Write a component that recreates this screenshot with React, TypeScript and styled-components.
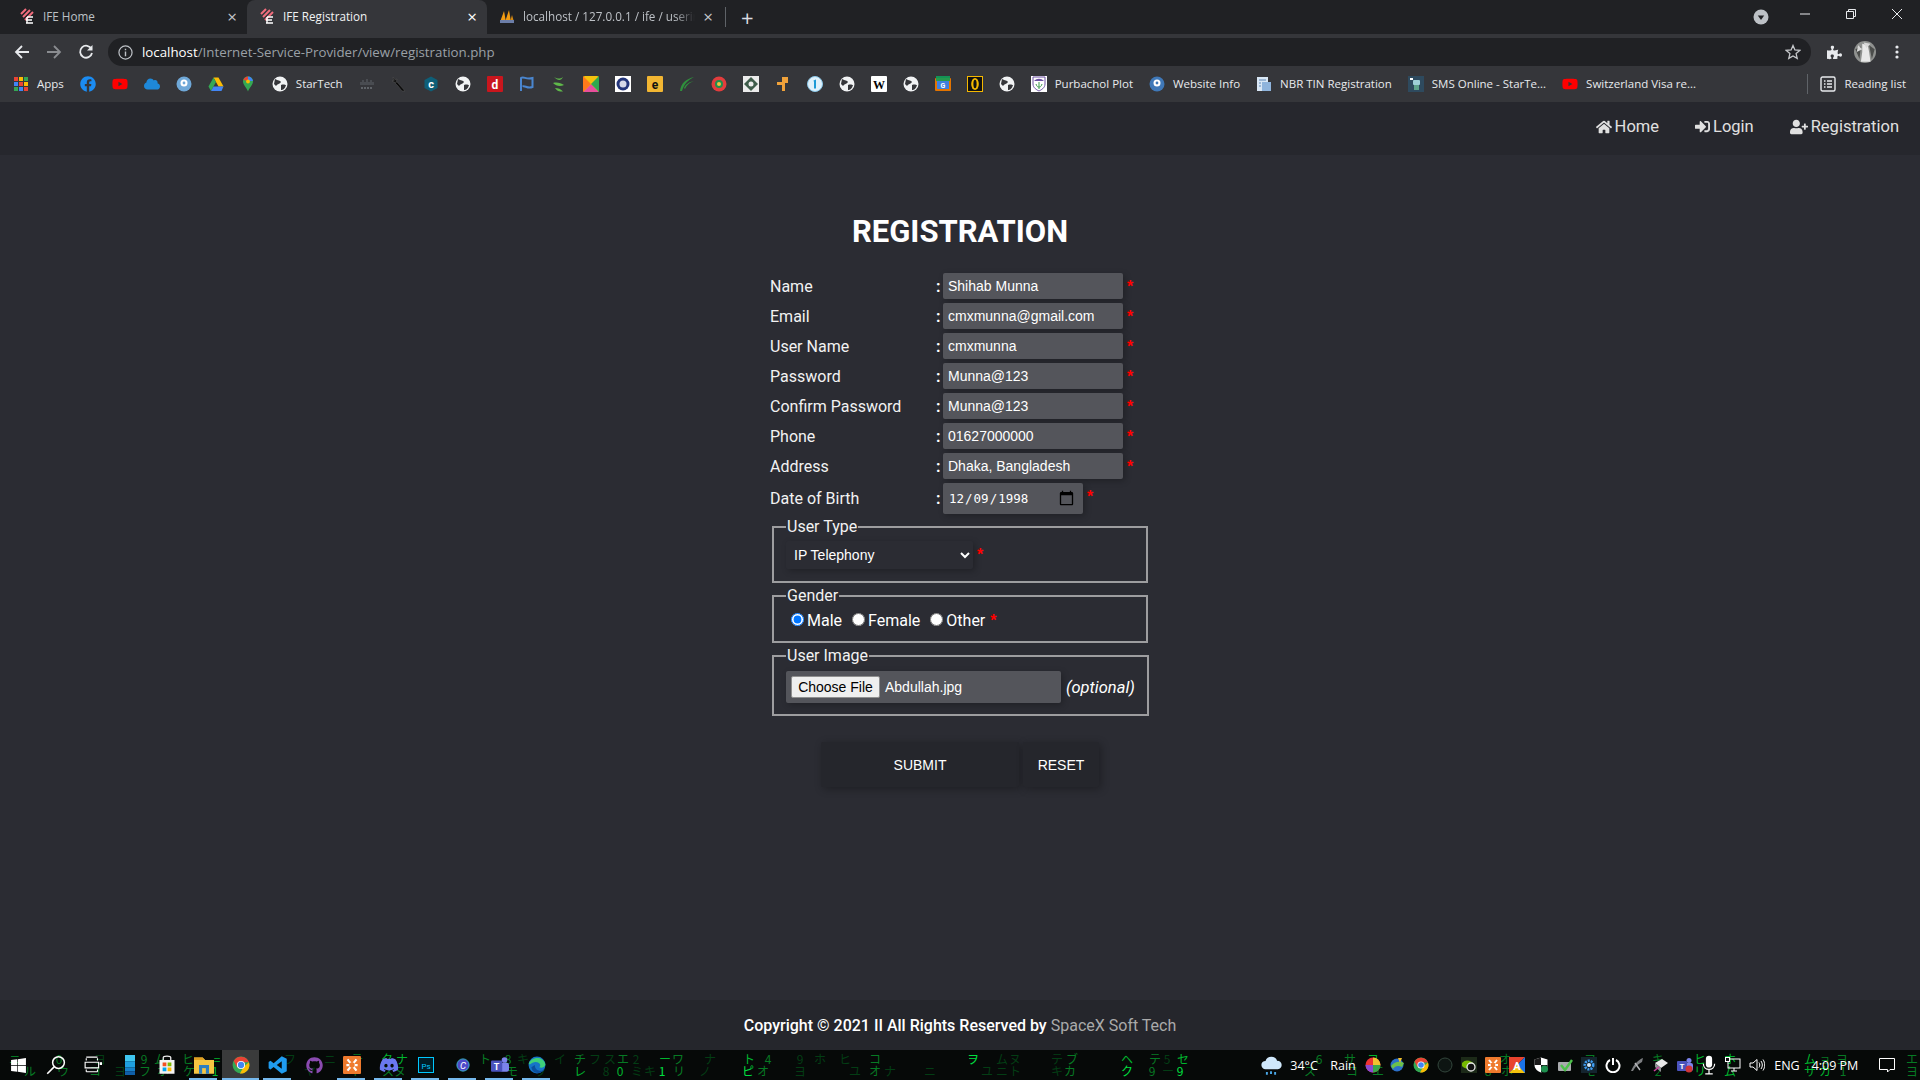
import React from 'react'
import styled, { createGlobalStyle } from 'styled-components'
import {
  FaHome,
  FaSignInAlt,
  FaUserPlus,
  FaFacebook,
  FaYoutube,
  FaCloud,
  FaPuzzlePiece,
  FaWindows,
  FaDiscord,
  FaGithub,
} from 'react-icons/fa'

const GlobalStyle = createGlobalStyle`
  html, body { margin: 0; padding: 0; background: #2b2c33; }
  * { box-sizing: border-box; }
`

const CHROME_FONT = `"Open Sans", "Noto Sans", sans-serif`
const PAGE_FONT = `Roboto, "Noto Sans", sans-serif`
const FORM_FONT = `"Liberation Sans", Arial, sans-serif`

const Page = styled.div`
  width: 1920px;
  height: 1080px;
  display: flex;
  flex-direction: column;
  overflow: hidden;
  background: #2b2c33;
  color: #fff;
  font-family: ${PAGE_FONT};
`

/* browser chrome */
const TabStrip = styled.div`
  height: 34px;
  background: #202124;
  display: flex;
  align-items: flex-end;
  padding-left: 7px;
  font: 11.7px ${CHROME_FONT};
`

const Tab = styled.div<{ $active?: boolean; $w?: number }>`
  width: ${(p) => p.$w || 240}px;
  height: 34px;
  display: flex;
  align-items: center;
  gap: 8px;
  padding: 0 10px 2px 12px;
  border-radius: 8px 8px 0 0;
  background: ${(p) => (p.$active ? '#35363a' : 'transparent')};
  color: ${(p) => (p.$active ? '#f1f3f4' : '#bdc1c6')};
`

const TabTitle = styled.span<{ $fade?: boolean }>`
  flex: 1;
  white-space: nowrap;
  overflow: hidden;
  mask-image: ${(p) => (p.$fade ? 'linear-gradient(to right, #000 88%, transparent)' : 'none')};
`

const TabClose = styled.span<{ $active?: boolean }>`
  font-size: 17px;
  line-height: 1;
  color: ${(p) => (p.$active ? '#fff' : '#c4c7cb')};
`

const TabSeparator = styled.div`
  width: 1px;
  height: 20px;
  margin: 0 0 7px 2px;
  background: #5f6368;
`

const NewTab = styled.span`
  margin: 0 0 6px 15px;
  font-size: 22px;
  line-height: 1;
  color: #dadce0;
`

const WindowControls = styled.div`
  margin-left: auto;
  height: 34px;
  display: flex;
  align-items: center;
`

const WindowButton = styled.div`
  width: 46px;
  display: flex;
  justify-content: center;
  margin-top: -6px;
`

const ProfileButton = styled(WindowButton)`
  margin: 0 9px 0 0;
  width: 24px;
`

const Toolbar = styled.div`
  height: 32px;
  background: #35363a;
  display: flex;
  align-items: flex-start;
  padding: 4px 0 0 6px;
`

const NavIcon = styled.div<{ $w?: number }>`
  width: ${(p) => p.$w || 32}px;
  flex: none;
  height: 28px;
  display: flex;
  align-items: center;
  justify-content: center;
`

const UrlBar = styled.div`
  width: 1703px;
  flex: none;
  height: 28px;
  margin-left: 6px;
  border-radius: 14px;
  background: #202124;
  display: flex;
  align-items: center;
  padding: 0 10px;
  font: 13.3px ${CHROME_FONT};
  color: #9aa0a6;
`

const UrlHost = styled.span`
  color: #fff;
  margin-left: 9px;
`

const UrlEnd = styled.div`
  margin-left: auto;
  display: flex;
`

const BookmarkBar = styled.div`
  height: 36px;
  background: #35363a;
  display: flex;
  align-items: center;
  padding: 0 0 1px 5px;
  font: 11.5px ${CHROME_FONT};
  color: #e8eaed;
  white-space: nowrap;
`

const Bookmark = styled.div`
  display: flex;
  align-items: center;
  gap: 8px;
  padding: 0 8px;
  height: 24px;
`

const BookmarkDivider = styled.div`
  width: 1px;
  height: 20px;
  background: #5f6368;
  margin-left: auto;
`

const ReadingList = styled(Bookmark)`
  padding: 0 14px 0 12px;
`

/* site */
const SiteNav = styled.nav`
  height: 53px;
  background: #26272d;
  display: flex;
  align-items: center;
  justify-content: flex-end;
  gap: 36px;
  padding: 0 21px 4px 0;
  font-size: 16.5px;
  color: #e0e0e0;
`

const SiteLink = styled.a`
  display: flex;
  align-items: center;
  gap: 3px;
`

const Main = styled.main`
  flex: 1;
  display: flex;
  flex-direction: column;
  align-items: center;
  padding-top: 56px;
`

const Heading = styled.h1`
  margin: 0 0 20px;
  height: 42px;
  line-height: 42px;
  font-size: 31px;
  font-weight: 700;
  color: #fff;
`

const Form = styled.form`
  width: 380px;
  display: flex;
  flex-direction: column;
  gap: 4px;
`

const Row = styled.div`
  height: 26px;
  display: flex;
  align-items: center;
`

const DateRow = styled(Row)`
  height: 31px;
  margin-bottom: 2px;
`

const Label = styled.label`
  width: 166px;
  font-size: 16px;
  color: #f2f2f2;
`

const Colon = styled.span`
  width: 7px;
  font-size: 16px;
  font-weight: 700;
`

const TextInput = styled.input`
  width: 180px;
  height: 26px;
  border: none;
  outline: none;
  border-radius: 2px;
  padding: 0 5px;
  background: #54555b;
  color: #fff;
  font: 14px ${FORM_FONT};
  box-shadow: 2px 2px 6px rgba(0, 0, 0, 0.25);
`

const DateInput = styled(TextInput)`
  width: 140px;
  height: 31px;
  font: 12.5px "DejaVu Sans Mono", monospace;
  &::-webkit-calendar-picker-indicator {
    width: 17px;
    height: 17px;
    padding: 0;
    margin: 0 3px 0 0;
  }
`

const Req = styled.span<{ $inline?: boolean }>`
  align-self: ${(p) => (p.$inline ? 'center' : 'flex-start')};
  margin: ${(p) => (p.$inline ? '0' : '5px 0 0 4px')};
  color: #ff0000;
  font: 700 16px/18px ${FORM_FONT};
`

const Group = styled.fieldset<{ $h: number }>`
  margin: 0 2px 2px 2px;
  padding: 0 12px;
  height: ${(p) => p.$h}px;
  border: 2px solid #9d9d9f;
  display: flex;
  align-items: flex-start;
`

const Legend = styled.legend`
  padding: 0 1px;
  margin-left: 0;
  font-size: 16px;
  line-height: 14px;
  color: #f2f2f2;
`

const SelectBox = styled.select`
  width: 187px;
  height: 28px;
  border: none;
  outline: none;
  border-radius: 2px;
  padding: 0 4px;
  background: #2b2c33;
  color: #fff;
  font: 14px ${FORM_FONT};
  box-shadow: 2px 2px 6px rgba(0, 0, 0, 0.25);
`

const SelectLine = styled.div`
  display: flex;
  margin-top: 7px;
`

const RadioLine = styled.div`
  display: flex;
  align-items: center;
  margin-top: 8px;
  font-size: 16px;
`

const Radio = styled.input`
  width: 13px;
  height: 13px;
  margin: 0 3px 2px 5px;
`

const RadioText = styled.label`
  margin-right: 5px;
`

const FileLine = styled.div`
  display: flex;
  align-items: center;
  margin-top: 8px;
`

const FileBox = styled.div`
  width: 275px;
  height: 32px;
  background: #54555b;
  border-radius: 2px;
  display: flex;
  align-items: center;
  padding-left: 5px;
  font: 14px ${FORM_FONT};
  box-shadow: 2px 2px 6px rgba(0, 0, 0, 0.25);
`

const FileButton = styled.button`
  width: 89px;
  height: 22px;
  padding: 0;
  margin-right: 5px;
  border: 1px solid #8f8f8f;
  border-radius: 2px;
  background: #efefef;
  color: #000;
  font: 14px ${FORM_FONT};
`

const Optional = styled.em`
  margin-left: 5px;
  font-size: 16.5px;
  white-space: nowrap;
`

const Buttons = styled.div`
  display: flex;
  justify-content: center;
  gap: 4px;
  margin-top: 20px;
`

const ActionButton = styled.button<{ $w: number }>`
  width: ${(p) => p.$w}px;
  height: 45px;
  border: none;
  border-radius: 2px;
  background: #25262c;
  color: #fff;
  font: 14px ${FORM_FONT};
  box-shadow: 2px 2px 8px rgba(0, 0, 0, 0.3);
`

const Footer = styled.footer`
  height: 50px;
  background: #25262c;
  display: flex;
  align-items: center;
  justify-content: center;
  font-size: 16px;
  font-weight: 500;
  color: #fff;
`

const FooterBrand = styled.span`
  margin-left: 4px;
  font-weight: 400;
  color: #aaa;
`

/* windows taskbar */
const Taskbar = styled.div`
  position: relative;
  height: 30px;
  background: #060908;
  overflow: hidden;
  display: flex;
  align-items: center;
  font: 12.5px ${CHROME_FONT};
  color: #fff;
`

const Matrix = styled.div`
  position: absolute;
  inset: 0;
  font: 12px/14px "Noto Sans CJK JP", monospace;
`

const LEVELS = ['#033d14', '#067a24', '#00b52e', '#00e040']

const MatrixGlyph = styled.span<{ $x: number; $row: number; $level: number }>`
  position: absolute;
  left: ${(p) => p.$x - 7}px;
  top: ${(p) => (p.$row === 0 ? 2 : 14)}px;
  width: 14px;
  text-align: center;
  color: ${(p) => LEVELS[p.$level]};
`

const TaskIcons = styled.div`
  position: relative;
  display: flex;
  align-items: center;
`

const TaskItem = styled.div<{ $active?: boolean; $open?: boolean }>`
  position: relative;
  width: 37px;
  height: 30px;
  display: flex;
  align-items: center;
  justify-content: center;
  background: ${(p) => (p.$active ? '#3a3b3b' : 'transparent')};
  &::after {
    content: '';
    position: absolute;
    bottom: 0;
    left: ${(p) => (p.$active ? 0 : 4)}px;
    right: ${(p) => (p.$active ? 0 : 5)}px;
    height: 2px;
    background: ${(p) => (p.$open ? '#76b9ed' : 'transparent')};
  }
`

const Tray = styled.div`
  position: relative;
  margin-left: auto;
  display: flex;
  align-items: center;
  height: 30px;
`

const TrayItem = styled.div<{ $w?: number }>`
  width: ${(p) => p.$w || 24}px;
  height: 30px;
  display: flex;
  align-items: center;
  justify-content: center;
`

const TrayText = styled.span<{ $w: number }>`
  width: ${(p) => p.$w}px;
  text-align: center;
  white-space: nowrap;
`

/* wallpaper glyphs seen behind the taskbar: x, character, row, brightness */
const MATRIX: [number, string, number, number][] = [
  [15, 'ニ', 0, 1], [59, '0', 0, 1], [144, '9', 0, 1], [160, 'ム', 0, 1], [188, 'ヒ', 0, 1], [217, '=', 0, 2],
  [100, 'ヨ', 0, 0], [290, 'フ', 0, 0], [330, 'ニ', 0, 0], [357, 'テ', 0, 1], [387, 'タ', 0, 2], [402, 'ナ', 0, 2],
  [485, 'ト', 0, 1], [508, '8', 0, 1], [523, 'キ', 0, 0], [560, 'イ', 0, 0], [580, 'チ', 0, 1], [595, 'フ', 0, 0],
  [610, 'ス', 0, 0], [623, 'エ', 0, 1], [636, '2', 0, 0], [665, 'ー', 0, 2], [678, 'ワ', 0, 1], [710, 'ナ', 0, 0],
  [749, 'ト', 0, 2], [768, '4', 0, 1], [800, '9', 0, 0], [820, 'ホ', 0, 0], [845, 'ヒ', 0, 0], [875, 'コ', 0, 1],
  [973, 'ヲ', 0, 3], [1002, 'ム', 0, 0], [1015, 'ヌ', 0, 0], [1057, 'テ', 0, 0], [1072, 'ブ', 0, 1],
  [1127, 'ヘ', 0, 2], [1155, 'テ', 0, 1], [1167, '5', 0, 0], [1183, 'セ', 0, 2], [1319, '6', 0, 1],
  [1350, 'サ', 0, 1], [1373, 'ヨ', 0, 2], [1505, 'オ', 0, 1], [1590, 'ヲ', 0, 1], [1658, 'キ', 0, 1],
  [1700, 'ヒ', 0, 2], [1730, 'ホ', 0, 2], [1810, 'ム', 0, 2], [1825, 'ョ', 0, 1], [1842, 'ヨ', 0, 1], [1912, 'エ', 0, 1],
  [30, 'ル', 1, 1], [63, 'ウ', 1, 1], [95, 'コ', 1, 1], [145, 'フ', 1, 1], [120, 'ヨ', 1, 0], [163, 'ホ', 1, 1],
  [189, 'ケ', 1, 1], [215, '1', 1, 2], [310, 'ヤ', 1, 0], [354, '4', 1, 1], [388, 'ス', 1, 1], [400, 'ヌ', 1, 1],
  [512, 'モ', 1, 1], [540, 'ウ', 1, 0], [580, 'レ', 1, 2], [606, '8', 1, 0], [620, '0', 1, 2], [637, 'ミ', 1, 0],
  [650, 'キ', 1, 0], [662, '1', 1, 3], [679, 'リ', 1, 1], [705, 'ノ', 1, 0], [748, 'ピ', 1, 3], [763, 'オ', 1, 1],
  [800, 'ヨ', 1, 0], [855, 'ユ', 1, 0], [875, 'オ', 1, 1], [890, 'ナ', 1, 0], [930, 'ニ', 1, 0],
  [987, 'ユ', 1, 0], [1002, 'ニ', 1, 0], [1015, 'ト', 1, 0], [1057, 'キ', 1, 0], [1070, 'カ', 1, 1],
  [1127, 'ク', 1, 3], [1152, '9', 1, 1], [1168, 'ー', 1, 0], [1180, '9', 1, 3], [1310, 'ス', 1, 1], [1352, 'コ', 1, 1],
  [1378, 'エ', 1, 1], [1488, '8', 1, 1], [1507, 'ホ', 1, 1], [1590, 'モ', 1, 1], [1658, '2', 1, 1], [1700, 'リ', 1, 2],
  [1730, 'ム', 1, 2], [1810, 'サ', 1, 2], [1825, 'カ', 1, 2], [1843, '1', 1, 1], [1912, 'ヨ', 1, 1],
]

const Svg = ({ s = 16, children, vb = '0 0 16 16' }: { s?: number; vb?: string; children: React.ReactNode }) => (
  <svg width={s} height={s} viewBox={vb} style={{ flex: 'none' }}>
    {children}
  </svg>
)

const IfeLogo = () => (
  <Svg>
    <g stroke="#f26d7d" strokeWidth="2" fill="none">
      <path d="M2 6 L7 1 M4 9 L11 2 M6 12 L14 4" />
      <path d="M8 9 h6 M7 12 h6 M7 15 h7 M8 9 v6" stroke="#fff" strokeWidth="1.4" />
    </g>
  </Svg>
)

const PmaLogo = () => (
  <Svg>
    <path d="M1 14 L5 3 L7 14 Z" fill="#f39c12" />
    <path d="M6 14 L10 2 L12 14 Z" fill="#f39c12" />
    <path d="M11 14 L13 7 L15 14 Z" fill="#d68910" />
    <rect x="1" y="12" width="14" height="3" fill="#6c7ea8" />
  </Svg>
)

const Globe = () => (
  <Svg>
    <circle cx="8" cy="8" r="7.5" fill="#f1f3f4" />
    <path d="M3 3 C6 5 8 4 9 6 C8 8 5 8 4 10 L2 8 Z M9 9 C12 8 13 9 14 9 C13 13 11 14 9 14 Z" fill="#35363a" />
  </Svg>
)

const AppsGrid = () => {
  const colors = ['#ea4335', '#fbbc04', '#34a853', '#4285f4', '#ea4335', '#fbbc04', '#34a853', '#4285f4', '#ea4335']
  return (
    <Svg>
      {colors.map((c, i) => (
        <rect key={i} x={1 + (i % 3) * 5} y={1 + Math.floor(i / 3) * 5} width="4" height="4" fill={c} />
      ))}
    </Svg>
  )
}

const Drive = () => (
  <Svg>
    <path d="M5.5 1.5 h5 l5 9 h-5 z" fill="#fbbc04" />
    <path d="M5.5 1.5 L0.5 10.5 L3 15 L8 6 z" fill="#34a853" />
    <path d="M3 15 h10.5 l2 -4.5 H5.5 z" fill="#4285f4" />
  </Svg>
)

const MapsPin = () => (
  <Svg>
    <path d="M8 0.5 C4.5 0.5 3 3 3 5.5 C3 9 7 12 8 15.5 C9 12 13 9 13 5.5 C13 3 11.5 0.5 8 0.5 Z" fill="#34a853" />
    <path d="M3.4 4 C4 2 6 0.5 8 0.5 L8 5 Z" fill="#ea4335" />
    <path d="M8 0.5 C10.5 .5 12.5 2.5 13 5 L8 5 Z" fill="#4285f4" />
    <circle cx="8" cy="5.5" r="1.9" fill="#fbbc04" />
  </Svg>
)

const ChromeLogo = ({ s = 16 }: { s?: number }) => (
  <Svg s={s}>
    <circle cx="8" cy="8" r="7.5" fill="#34a853" />
    <path d="M1.5 4.5 A7.5 7.5 0 0 1 15 5.5 L8 5.5 L4.5 10 Z" fill="#ea4335" />
    <path d="M15 5.5 A7.5 7.5 0 0 1 7 15.5 L10.5 9.5 Z" fill="#fbbc04" />
    <circle cx="8" cy="8" r="3.6" fill="#fff" />
    <circle cx="8" cy="8" r="2.8" fill="#4285f4" />
  </Svg>
)

const Tile = ({ bg, fg = '#fff', text, fam = PAGE_FONT }: { bg: string; fg?: string; text: string; fam?: string }) => (
  <Svg>
    <rect width="16" height="16" rx="1" fill={bg} />
    <text x="8" y="12.5" textAnchor="middle" fontSize="12" fontWeight="700" fill={fg} fontFamily={fam}>
      {text}
    </text>
  </Svg>
)

const Badge = ({ color, inner = '#fff' }: { color: string; inner?: string }) => (
  <Svg>
    <circle cx="8" cy="8" r="7.5" fill={color} />
    <circle cx="8" cy="7" r="3.5" fill={inner} />
    <circle cx="8" cy="7" r="1.4" fill={color} />
  </Svg>
)

const Bird = () => (
  <Svg>
    <path d="M2 1 L7 7 L14 15 L11 15 L7 10 L3 6 Z" fill="#0b0b0b" stroke="#555" strokeWidth="0.5" />
    <path d="M1 5 L6 3 L5 7 Z" fill="#111" stroke="#666" strokeWidth="0.4" />
  </Svg>
)

const Cisco = () => (
  <Svg>
    <g stroke="#5f6368" strokeWidth="1">
      <path d="M2 6 v3 M4 4 v5 M6 6 v3 M8 3 v6 M10 6 v3 M12 4 v5 M14 6 v3" />
      <path d="M2 12 h12" strokeWidth="2" strokeDasharray="2 1" />
    </g>
  </Svg>
)

const Hexagon = () => (
  <Svg>
    <path d="M8 .5 L14.5 4 V12 L8 15.5 L1.5 12 V4 Z" fill="#0e5f78" />
    <text x="8" y="12" textAnchor="middle" fontSize="11" fontWeight="700" fill="#fff" fontFamily={PAGE_FONT}>c</text>
  </Svg>
)

const Flag = () => (
  <Svg>
    <path d="M2 15 V2 C5 0 7 4 13.5 2 V11 C8 13 6 9 3.5 10.5" fill="none" stroke="#4a86cf" strokeWidth="2" />
  </Svg>
)

const Leaf = () => (
  <Svg>
    <path d="M3 1 C7 3 9 3 12 1 C10 5 7 5 3 1 Z M2 7 C6 6 10 7 13 9 C9 11 5 10 2 7 Z M4 12 C7 12 10 13 12 15.5 C8 15.5 6 15 4 12 Z" fill="#5fb84a" />
  </Svg>
)

const Rainbow = () => (
  <Svg>
    <rect width="16" height="16" rx="2" fill="#f4c20d" />
    <path d="M0 16 L8 8 L16 16 Z" fill="#e84f9c" />
    <path d="M16 0 L8 8 L16 16 Z" fill="#2fa84f" />
    <path d="M0 0 L8 8 L0 16 Z" fill="#ff7a1a" />
  </Svg>
)

const Seal = () => (
  <Svg>
    <rect width="16" height="16" fill="#fff" />
    <circle cx="8" cy="8" r="6.5" fill="#23357a" />
    <circle cx="8" cy="8" r="3.5" fill="#d5d8e8" />
  </Svg>
)

const Grass = () => (
  <Svg>
    <path d="M1 15 C2 7 7 3 15 1 C9 4 5 8 3 15 Z" fill="#2f8f3c" />
    <path d="M5 12 C7 8 10 6 15 5 C10 7 8 9 6 13 Z" fill="#2f8f3c" />
  </Svg>
)

const Shield = () => (
  <Svg>
    <circle cx="8" cy="8" r="7.5" fill="#e23d3d" />
    <circle cx="8" cy="8" r="4" fill="#1f8f4e" />
    <circle cx="8" cy="8" r="2" fill="#f0c040" />
  </Svg>
)

const Diamond = () => (
  <Svg>
    <rect width="16" height="16" fill="#ececec" />
    <path d="M8 1 L15 8 L8 15 L1 8 Z" fill="#3e5c4a" />
    <circle cx="8" cy="8" r="2.5" fill="#ececec" />
  </Svg>
)

const Cross = () => (
  <Svg>
    <path d="M7 1 H13 V7 H10 V15 H7 V9 H2 V6 H7 Z" fill="#f0a23a" />
  </Svg>
)

const OneBadge = () => (
  <Svg>
    <circle cx="8" cy="8" r="7.5" fill="#dff1fb" stroke="#8ac8ea" />
    <path d="M6.5 4.5 L9 3.5 V12.5 H7 V6 Z" fill="#1b9ad6" />
  </Svg>
)

const Calendar = () => (
  <Svg>
    <rect y="2" width="16" height="13" rx="1" fill="#e37400" />
    <rect x="1" y="0" width="14" height="5" fill="#0f9d58" opacity="0.9" />
    <rect x="2" y="5" width="12" height="8" fill="#3d7fe0" />
    <text x="8" y="12" textAnchor="middle" fontSize="7" fontWeight="700" fill="#fff" fontFamily={PAGE_FONT}>G</text>
  </Svg>
)

const RingTile = () => (
  <Svg>
    <rect width="16" height="16" fill="#f5b800" />
    <rect x="1" y="1" width="14" height="14" fill="#111" />
    <ellipse cx="8" cy="8" rx="3.8" ry="6" fill="#f5b800" />
    <ellipse cx="8" cy="8" rx="1.6" ry="4.2" fill="#111" />
  </Svg>
)

const Emblem = () => (
  <Svg>
    <rect width="16" height="16" fill="#fff" />
    <path d="M2 1 H14 V8 C14 12 10 14 8 15 C6 14 2 12 2 8 Z" fill="#fff" stroke="#6a4fa0" strokeWidth="1" />
    <path d="M3 5 C6 2 10 2 13 5 Z" fill="#6a4fa0" />
    <path d="M8 6 V13 M5 8 C6 11 7 11 8 11 M11 8 C10 11 9 11 8 11" stroke="#3a9a4a" fill="none" />
  </Svg>
)

const DocIcon = () => (
  <Svg>
    <rect x="1" y="1" width="11" height="14" fill="#d9e7f5" />
    <rect x="6" y="6" width="9" height="9" fill="#8fb4dc" />
    <path d="M3 4 h7 M3 7 h2 M3 10 h2" stroke="#5f87b5" />
  </Svg>
)

const Robot = () => (
  <Svg>
    <rect width="16" height="16" fill="#2e4a5e" />
    <rect x="5" y="4" width="7" height="5" rx="1" fill="#9ed0d8" />
    <rect x="6" y="9" width="5" height="5" fill="#5ea38c" />
    <rect x="2" y="2" width="3" height="2" fill="#fff" />
  </Svg>
)

const ReadingIcon = () => (
  <Svg>
    <rect x="1" y="1" width="14" height="14" rx="1.5" fill="none" stroke="#e8eaed" strokeWidth="1.4" />
    <path d="M4 5 h1.5 M7 5 h5 M4 8 h1.5 M7 8 h5 M4 11 h1.5 M7 11 h5" stroke="#e8eaed" strokeWidth="1.4" />
  </Svg>
)

const Back = () => (
  <Svg>
    <path d="M15 8 H2 M8 2 L2 8 L8 14" fill="none" stroke="#e8eaed" strokeWidth="1.8" />
  </Svg>
)

const Forward = () => (
  <Svg>
    <path d="M1 8 H14 M8 2 L14 8 L8 14" fill="none" stroke="#8a8c90" strokeWidth="1.8" />
  </Svg>
)

const Reload = () => (
  <Svg>
    <path d="M13.5 5 A6 6 0 1 0 14 9" fill="none" stroke="#e8eaed" strokeWidth="1.8" />
    <path d="M14.5 1 V6.5 H9 Z" fill="#e8eaed" />
  </Svg>
)

const Info = () => (
  <Svg s={15}>
    <circle cx="8" cy="8" r="7" fill="none" stroke="#bdc1c6" strokeWidth="1.3" />
    <path d="M8 7 V12 M8 4 V5.6" stroke="#bdc1c6" strokeWidth="1.5" />
  </Svg>
)

const StarOutline = () => (
  <Svg>
    <path d="M8 1.5 L9.9 6 L14.8 6.4 L11.1 9.6 L12.2 14.4 L8 11.9 L3.8 14.4 L4.9 9.6 L1.2 6.4 L6.1 6 Z" fill="none" stroke="#c6c8cb" strokeWidth="1.3" />
  </Svg>
)

const Avatar = () => (
  <Svg s={22}>
    <circle cx="8" cy="8" r="8" fill="#8f918f" />
    <path d="M6 2 L10 3 L11 8 L12 15 L5 15 L6 8 Z" fill="#e9e9e9" />
    <path d="M1 6 L5 4 L4 13 Z M11 3 L15 6 L13 13 Z" fill="#4b4d4b" />
    <path d="M7 1 L12 2 L9 5 Z M3 3 L6 6 L2 8 Z" fill="#d8d8d8" />
  </Svg>
)

const Dots = () => (
  <Svg>
    <circle cx="8" cy="3" r="1.6" fill="#e8eaed" />
    <circle cx="8" cy="8" r="1.6" fill="#e8eaed" />
    <circle cx="8" cy="13" r="1.6" fill="#e8eaed" />
  </Svg>
)

const ProfileDrop = () => (
  <Svg>
    <circle cx="8" cy="8" r="7.5" fill="#bdc1c6" />
    <path d="M4.8 6.5 H11.2 L8 11 Z" fill="#202124" />
  </Svg>
)

const Minimize = () => (
  <Svg s={12} vb="0 0 12 12">
    <path d="M1 6 H11" stroke="#e8eaed" />
  </Svg>
)

const Restore = () => (
  <Svg s={12} vb="0 0 12 12">
    <path d="M1.5 3.5 H8.5 V10.5 H1.5 Z M3.5 3.5 V1.5 H10.5 V8.5 H8.5" fill="none" stroke="#e8eaed" />
  </Svg>
)

const CloseX = () => (
  <Svg s={12} vb="0 0 12 12">
    <path d="M1 1 L11 11 M11 1 L1 11" stroke="#e8eaed" />
  </Svg>
)

const SearchIcon = () => (
  <Svg s={20}>
    <circle cx="10" cy="6" r="4.7" fill="none" stroke="#fff" strokeWidth="1.2" />
    <path d="M6.5 9.5 L1 15" stroke="#fff" strokeWidth="1.3" />
  </Svg>
)

const TaskView = () => (
  <Svg s={18}>
    <path d="M2 1 H12 M2 4 V2 M12 4 V2 M1 5.5 H13 V10.5 H1 Z M2 14 H12 M2 12 V14 M12 12 V14" fill="none" stroke="#fff" strokeWidth="1" />
    <rect x="14" y="5.5" width="2" height="2.5" fill="#fff" />
  </Svg>
)

const BlueBar = () => (
  <Svg s={20}>
    <rect x="4" y="0" width="8" height="5" fill="#3ec6f0" />
    <rect x="4" y="5" width="8" height="5" fill="#1e9fe0" />
    <rect x="4" y="10" width="8" height="3" fill="#1680c8" />
    <rect x="4" y="13" width="8" height="3" fill="#0f5fa8" />
  </Svg>
)

const StoreIcon = () => (
  <Svg s={20}>
    <path d="M2 4 H14 V15 H2 Z" fill="#f3f3f3" />
    <path d="M5 4 V2 C5 .5 11 .5 11 2 V4" fill="none" stroke="#f3f3f3" />
    <rect x="4.5" y="6" width="3" height="3" fill="#f25022" />
    <rect x="8.5" y="6" width="3" height="3" fill="#7fba00" />
    <rect x="4.5" y="10" width="3" height="3" fill="#00a4ef" />
    <rect x="8.5" y="10" width="3" height="3" fill="#ffb900" />
  </Svg>
)

const Explorer = () => (
  <Svg s={20}>
    <path d="M0 2 H7 L9 4 H16 V15 H0 Z" fill="#f5c542" />
    <path d="M0 2 H7 L8 4 H0 Z" fill="#e0a020" />
    <rect x="4" y="8" width="8" height="7" fill="#2d7fc1" />
    <rect x="6.5" y="10.5" width="3" height="4.5" fill="#f5c542" />
  </Svg>
)

const VsCode = () => (
  <Svg s={20}>
    <path d="M11 1 L15 3 V13 L11 15 L4.5 9.5 L2 11.5 L.5 10.5 V5.5 L2 4.5 L4.5 6.5 Z M11 5 L7 8 L11 11 Z" fill="#1f9cf0" fillRule="evenodd" />
  </Svg>
)

const Ps = () => (
  <Svg s={16}>
    <rect x=".5" y=".5" width="15" height="15" fill="#001d26" stroke="#00c8ff" />
    <text x="8" y="11.5" textAnchor="middle" fontSize="8" fill="#00c8ff" fontFamily={PAGE_FONT}>Ps</text>
  </Svg>
)

const Xampp = ({ s = 18 }: { s?: number }) => (
  <Svg s={s}>
    <rect width="16" height="16" rx="1" fill="#ef7a2d" />
    <path d="M4 3 L12 13 M12 3 L4 13 M3 8 H13" stroke="#fff" strokeWidth="2" />
    <circle cx="8" cy="8" r="2.4" fill="#ef7a2d" />
  </Svg>
)

const CIcon = () => (
  <Svg s={14}>
    <circle cx="8" cy="8" r="7" fill="#4e4ac8" />
    <circle cx="8" cy="8" r="7" fill="none" stroke="#3ac0d8" strokeWidth="1" />
    <text x="8" y="12" textAnchor="middle" fontSize="11" fontStyle="italic" fill="#fff" fontFamily={PAGE_FONT}>C</text>
  </Svg>
)

const Teams = ({ s = 18, dot }: { s?: number; dot?: boolean }) => (
  <Svg s={s}>
    <circle cx="12" cy="3.5" r="2.5" fill="#7b83eb" />
    <rect x="8" y="6" width="8" height="8" rx="2" fill="#7b83eb" />
    <rect x="0" y="4" width="10" height="10" rx="1" fill="#4b53bc" />
    <text x="5" y="12" textAnchor="middle" fontSize="8" fontWeight="700" fill="#fff" fontFamily={PAGE_FONT}>T</text>
    {dot && <circle cx="12" cy="12" r="3.5" fill="#d13438" />}
  </Svg>
)

const Edge = () => (
  <Svg s={18}>
    <circle cx="8" cy="8" r="7.5" fill="#1674c8" />
    <path d="M.6 7 C2 1 13 -1 15.4 7 C16 10 12 11 10 10 C13 7 8 4 4 6 C2.5 7 1.5 8 .6 7 Z" fill="#3ed07a" />
    <path d="M6 8 C6 13 12 15 15 11 C13 16 4 17 3 10 Z" fill="#0b4f9e" />
  </Svg>
)

const TrayCloud = () => (
  <Svg s={22}>
    <path d="M4 11 A3 3 0 0 1 4 5 A4.5 4.5 0 0 1 12.5 5 A3 3 0 0 1 13 11 Z" fill="#cfe8fb" />
    <path d="M5 13 V15 M8 12.5 V14.5 M11 13 V15" stroke="#4aa8e8" strokeWidth="1.4" />
  </Svg>
)

const Wheel = () => (
  <Svg>
    <circle cx="8" cy="8" r="7.5" fill="#e33" />
    <path d="M8 8 L8 .5 A7.5 7.5 0 0 1 15.5 8 Z" fill="#f2c230" />
    <path d="M8 8 L15.5 8 A7.5 7.5 0 0 1 8 15.5 Z" fill="#3aa84a" />
    <path d="M8 8 L8 15.5 A7.5 7.5 0 0 1 .5 8 Z" fill="#8a4ad0" />
  </Svg>
)

const Idm = () => (
  <Svg>
    <circle cx="8" cy="8" r="6.5" fill="#2b6fc9" />
    <path d="M2 9 C6 4 11 4 15 6 L13 10 C9 8 6 9 4 12 Z" fill="#6cc04a" />
    <path d="M9 1 H13 L11 6 Z" fill="#f2c230" />
  </Svg>
)

const DarkRing = () => (
  <Svg>
    <circle cx="8" cy="8" r="7" fill="#0d1512" stroke="#33463c" />
  </Svg>
)

const NvTile = () => (
  <Svg>
    <rect width="16" height="16" fill="#1c2a18" />
    <path d="M1 6 C5 1 11 4 14 8 C11 12 5 13 1 9 Z" fill="#76b900" />
    <circle cx="10" cy="10" r="4" fill="#111" stroke="#e8e8e8" strokeWidth="1.3" />
  </Svg>
)

const AvgTile = () => (
  <Svg>
    <path d="M0 0 H16 L0 16 Z" fill="#e8432e" />
    <path d="M16 0 V16 H0 Z" fill="#1a73e8" />
    <path d="M0 16 L8 8 L16 16 Z" fill="#f4c20d" />
    <text x="8" y="12.5" textAnchor="middle" fontSize="11" fontWeight="700" fill="#fff" fontFamily={PAGE_FONT}>A</text>
  </Svg>
)

const DefenderIcon = () => (
  <Svg>
    <path d="M8 .5 L14.5 2.5 V8 C14.5 12 11 14.5 8 15.5 C5 14.5 1.5 12 1.5 8 V2.5 Z" fill="#fff" />
    <path d="M8 .5 V8 H1.5 V2.5 Z M8 8 H14.5 C14.5 12 11 14.5 8 15.5 Z" fill="#1a1a1a" />
    <circle cx="11.5" cy="12" r="3.6" fill="#1e8f4e" />
  </Svg>
)

const CheckDrive = () => (
  <Svg>
    <rect x="1" y="5" width="13" height="9" rx="1" fill="#a8aaad" />
    <path d="M4 8 L8 13 L15 3" fill="none" stroke="#4cc04a" strokeWidth="2.4" />
  </Svg>
)

const GearTile = () => (
  <Svg>
    <rect width="16" height="16" fill="#14242e" />
    <circle cx="8" cy="8" r="4.2" fill="none" stroke="#3f9cf0" strokeWidth="2.6" strokeDasharray="2 1" />
    <circle cx="8" cy="8" r="2" fill="#cfe8fb" />
  </Svg>
)

const PowerIcon = () => (
  <Svg>
    <path d="M5 3 A6.5 6.5 0 1 0 11 3" fill="none" stroke="#fff" strokeWidth="2" />
    <path d="M8 1 V8" stroke="#fff" strokeWidth="2" />
  </Svg>
)

const Feather = () => (
  <Svg>
    <path d="M14 1 C9 3 5 7 2 14 L4 14 C6 10 9 7 13 5 Z" fill="#7d7f82" />
    <path d="M6 6 L11 13" stroke="#b5b7ba" strokeWidth="1.4" />
  </Svg>
)

const Printer = () => (
  <Svg>
    <path d="M2 6 L9 2 L15 6 L8 11 Z" fill="#e8e8e8" />
    <path d="M2 6 V10 L8 15 V11 Z" fill="#8d8f92" />
    <path d="M1 14 L6 10" stroke="#d040a0" strokeWidth="1.6" />
  </Svg>
)

const Mic = () => (
  <Svg s={20}>
    <rect x="5.5" y="0.5" width="5" height="9.5" rx="2.5" fill="#fff" />
    <path d="M3.5 7 C3.5 13 12.5 13 12.5 7 M8 12 V15 M5 15 H11" fill="none" stroke="#fff" />
  </Svg>
)

const Net = () => (
  <Svg>
    <rect x="3" y="2" width="12" height="9" fill="none" stroke="#fff" />
    <path d="M9 11 V14 M6 14 H12" stroke="#fff" />
    <rect x="0.5" y="0.5" width="4" height="4" fill="#111" stroke="#fff" />
  </Svg>
)

const Speaker = () => (
  <Svg>
    <path d="M1 6 H4 L8 2.5 V13.5 L4 10 H1 Z" fill="none" stroke="#fff" />
    <path d="M10 5.5 C11 7 11 9 10 10.5 M12 4 C13.8 6.5 13.8 9.5 12 12 M14 2.5 C16.3 6 16.3 10 14 13.5" fill="none" stroke="#fff" />
  </Svg>
)

const Notify = () => (
  <Svg>
    <path d="M.5 1.5 H15.5 V12.5 H11 L8.5 15 V12.5 H.5 Z" fill="none" stroke="#fff" />
  </Svg>
)

const FIELDS = [
  { label: 'Name', value: 'Shihab Munna' },
  { label: 'Email', value: 'cmxmunna@gmail.com' },
  { label: 'User Name', value: 'cmxmunna' },
  { label: 'Password', value: 'Munna@123' },
  { label: 'Confirm Password', value: 'Munna@123' },
  { label: 'Phone', value: '01627000000' },
  { label: 'Address', value: 'Dhaka, Bangladesh' },
]

const BOOKMARK_ICONS: React.ReactNode[] = [
  <Cisco />,
  <Bird />,
  <Hexagon />,
  <Globe />,
  <Tile bg="#c9161d" text="d" />,
  <Flag />,
  <Leaf />,
  <Rainbow />,
  <Seal />,
  <Tile bg="#f2b632" fg="#111" text="e" />,
  <Grass />,
  <Shield />,
  <Diamond />,
  <Cross />,
  <OneBadge />,
  <Globe />,
  <Tile bg="#fff" fg="#000" text="W" fam={`"Liberation Serif", serif`} />,
  <Globe />,
  <Calendar />,
  <RingTile />,
  <Globe />,
]

const App = (): JSX.Element => {
  return (
    <Page>
      <GlobalStyle />
      <TabStrip>
        <Tab>
          <IfeLogo />
          <TabTitle>IFE Home</TabTitle>
          <TabClose>×</TabClose>
        </Tab>
        <Tab $active>
          <IfeLogo />
          <TabTitle>IFE Registration</TabTitle>
          <TabClose $active>×</TabClose>
        </Tab>
        <Tab $w={236}>
          <PmaLogo />
          <TabTitle $fade>localhost / 127.0.0.1 / ife / userinfo</TabTitle>
          <TabClose>×</TabClose>
        </Tab>
        <TabSeparator />
        <NewTab>+</NewTab>
        <WindowControls>
          <ProfileButton>
            <ProfileDrop />
          </ProfileButton>
          <WindowButton>
            <Minimize />
          </WindowButton>
          <WindowButton>
            <Restore />
          </WindowButton>
          <WindowButton>
            <CloseX />
          </WindowButton>
        </WindowControls>
      </TabStrip>

      <Toolbar>
        <NavIcon>
          <Back />
        </NavIcon>
        <NavIcon>
          <Forward />
        </NavIcon>
        <NavIcon>
          <Reload />
        </NavIcon>
        <UrlBar>
          <Info />
          <UrlHost>localhost</UrlHost>/Internet-Service-Provider/view/registration.php
          <UrlEnd>
            <StarOutline />
          </UrlEnd>
        </UrlBar>
        <NavIcon $w={46}>
          <FaPuzzlePiece size={15} color="#e8eaed" />
        </NavIcon>
        <NavIcon $w={16}>
          <Avatar />
        </NavIcon>
        <NavIcon $w={47}>
          <Dots />
        </NavIcon>
      </Toolbar>

      <BookmarkBar>
        <Bookmark>
          <AppsGrid />
          Apps
        </Bookmark>
        <Bookmark>
          <FaFacebook size={16} color="#1b8cf2" />
        </Bookmark>
        <Bookmark>
          <FaYoutube size={16} color="#f00" />
        </Bookmark>
        <Bookmark>
          <FaCloud size={16} color="#1e88d8" />
        </Bookmark>
        <Bookmark>
          <Badge color="#6fa8d8" />
        </Bookmark>
        <Bookmark>
          <Drive />
        </Bookmark>
        <Bookmark>
          <MapsPin />
        </Bookmark>
        <Bookmark>
          <Globe />
          StarTech
        </Bookmark>
        {BOOKMARK_ICONS.map((icon, i) => (
          <Bookmark key={i}>{icon}</Bookmark>
        ))}
        <Bookmark>
          <Emblem />
          Purbachol Plot
        </Bookmark>
        <Bookmark>
          <Badge color="#3f78b8" />
          Website Info
        </Bookmark>
        <Bookmark>
          <DocIcon />
          NBR TIN Registration
        </Bookmark>
        <Bookmark>
          <Robot />
          SMS Online - StarTe...
        </Bookmark>
        <Bookmark>
          <FaYoutube size={16} color="#f00" />
          Switzerland Visa re...
        </Bookmark>
        <BookmarkDivider />
        <ReadingList>
          <ReadingIcon />
          Reading list
        </ReadingList>
      </BookmarkBar>

      <SiteNav>
        <SiteLink>
          <FaHome size={16} />
          Home
        </SiteLink>
        <SiteLink>
          <FaSignInAlt size={15} />
          Login
        </SiteLink>
        <SiteLink>
          <FaUserPlus size={18} />
          Registration
        </SiteLink>
      </SiteNav>

      <Main>
        <Heading>REGISTRATION</Heading>
        <Form>
          {FIELDS.map((f) => (
            <Row key={f.label}>
              <Label>{f.label}</Label>
              <Colon>:</Colon>
              <TextInput type="text" defaultValue={f.value} />
              <Req>*</Req>
            </Row>
          ))}
          <DateRow>
            <Label>Date of Birth</Label>
            <Colon>:</Colon>
            <DateInput type="date" defaultValue="1998-12-09" />
            <Req>*</Req>
          </DateRow>

          <Group $h={63}>
            <Legend>User Type</Legend>
            <SelectLine>
              <SelectBox defaultValue="IP Telephony">
                <option>IP Telephony</option>
                <option>Broadband</option>
              </SelectBox>
              <Req>*</Req>
            </SelectLine>
          </Group>

          <Group $h={54}>
            <Legend>Gender</Legend>
            <RadioLine>
              <Radio type="radio" name="gender" defaultChecked />
              <RadioText>Male</RadioText>
              <Radio type="radio" name="gender" />
              <RadioText>Female</RadioText>
              <Radio type="radio" name="gender" />
              <RadioText>Other</RadioText>
              <Req $inline>*</Req>
            </RadioLine>
          </Group>

          <Group $h={67}>
            <Legend>User Image</Legend>
            <FileLine>
              <FileBox>
                <FileButton type="button">Choose File</FileButton>
                Abdullah.jpg
              </FileBox>
              <Optional>(optional)</Optional>
            </FileLine>
          </Group>

          <Buttons>
            <ActionButton type="button" $w={198}>
              SUBMIT
            </ActionButton>
            <ActionButton type="button" $w={76}>
              RESET
            </ActionButton>
          </Buttons>
        </Form>
      </Main>

      <Footer>
        Copyright © 2021 II All Rights Reserved by <FooterBrand>SpaceX Soft Tech</FooterBrand>
      </Footer>

      <Taskbar>
        <Matrix>
          {MATRIX.map(([x, ch, row, level], i) => (
            <MatrixGlyph key={i} $x={x} $row={row} $level={level}>
              {ch}
            </MatrixGlyph>
          ))}
        </Matrix>
        <TaskIcons>
          <TaskItem>
            <FaWindows size={17} color="#fff" />
          </TaskItem>
          <TaskItem>
            <SearchIcon />
          </TaskItem>
          <TaskItem>
            <TaskView />
          </TaskItem>
          <TaskItem>
            <BlueBar />
          </TaskItem>
          <TaskItem>
            <StoreIcon />
          </TaskItem>
          <TaskItem $open>
            <Explorer />
          </TaskItem>
          <TaskItem $active $open>
            <ChromeLogo s={18} />
          </TaskItem>
          <TaskItem $open>
            <VsCode />
          </TaskItem>
          <TaskItem>
            <FaGithub size={17} color="#8a4bb0" />
          </TaskItem>
          <TaskItem $open>
            <Xampp />
          </TaskItem>
          <TaskItem $open>
            <FaDiscord size={20} color="#6a78f0" />
          </TaskItem>
          <TaskItem $open>
            <Ps />
          </TaskItem>
          <TaskItem $open>
            <CIcon />
          </TaskItem>
          <TaskItem $open>
            <Teams />
          </TaskItem>
          <TaskItem $open>
            <Edge />
          </TaskItem>
        </TaskIcons>
        <Tray>
          <TrayItem>
            <TrayCloud />
          </TrayItem>
          <TrayText $w={42}>34°C</TrayText>
          <TrayText $w={36}>Rain</TrayText>
          <TrayItem>
            <Wheel />
          </TrayItem>
          <TrayItem>
            <Idm />
          </TrayItem>
          <TrayItem>
            <ChromeLogo />
          </TrayItem>
          <TrayItem>
            <DarkRing />
          </TrayItem>
          <TrayItem>
            <NvTile />
          </TrayItem>
          <TrayItem>
            <Xampp s={16} />
          </TrayItem>
          <TrayItem>
            <AvgTile />
          </TrayItem>
          <TrayItem>
            <DefenderIcon />
          </TrayItem>
          <TrayItem>
            <CheckDrive />
          </TrayItem>
          <TrayItem>
            <GearTile />
          </TrayItem>
          <TrayItem>
            <PowerIcon />
          </TrayItem>
          <TrayItem>
            <Feather />
          </TrayItem>
          <TrayItem>
            <Printer />
          </TrayItem>
          <TrayItem>
            <Teams s={16} dot />
          </TrayItem>
          <TrayItem>
            <Mic />
          </TrayItem>
          <TrayItem>
            <Net />
          </TrayItem>
          <TrayItem>
            <Speaker />
          </TrayItem>
          <TrayText $w={36}>ENG</TrayText>
          <TrayText $w={60}>4:09 PM</TrayText>
          <TrayItem $w={44}>
            <Notify />
          </TrayItem>
          <TrayItem $w={11} />
        </Tray>
      </Taskbar>
    </Page>
  )
}

export default App
